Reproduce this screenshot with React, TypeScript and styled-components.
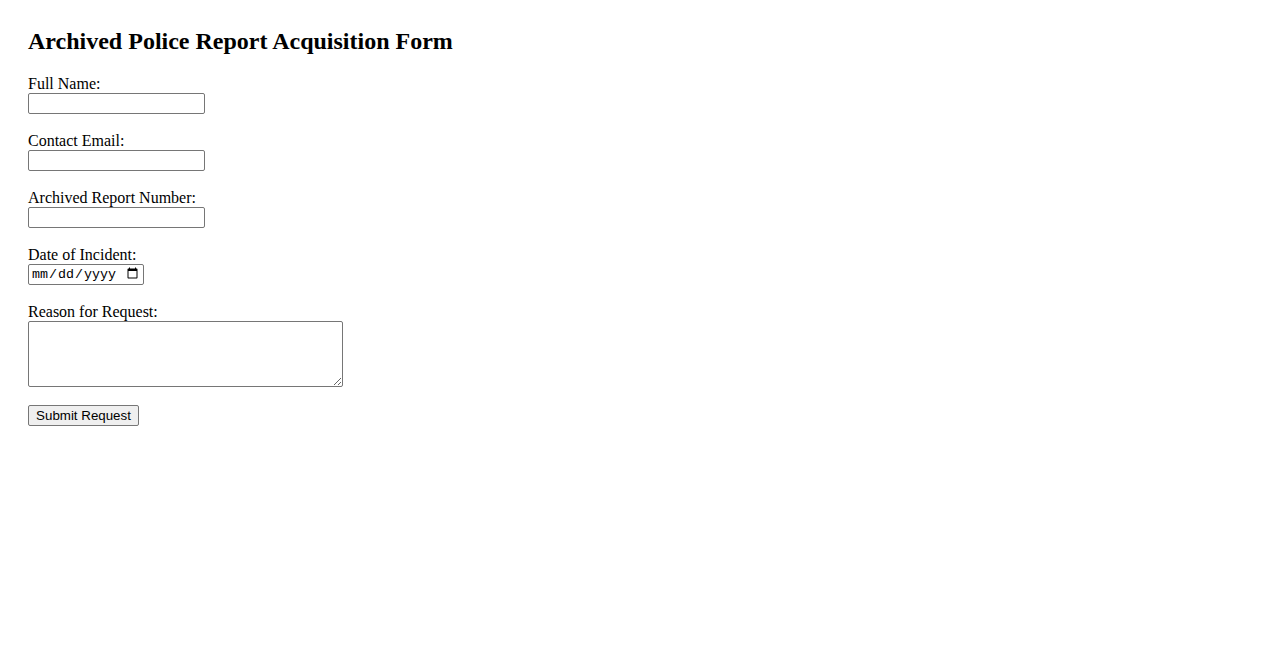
import styled, { createGlobalStyle } from "styled-components";

const GlobalStyle = createGlobalStyle`
    html, body {
        margin: 0;
        padding: 0;
        background: #ffffff;
    }
    body {
        font-family: "Liberation Serif", "Times New Roman", serif;
        font-size: 16px;
        color: #000000;
    }
`

const Page = styled.main`
    padding: 28px;
`

const Heading = styled.h2`
    margin: 0 0 19px;
    font-size: 24px;
    font-weight: 700;
    line-height: 27.5px;
`

const Form = styled.form`
    display: flex;
    flex-direction: column;
    align-items: flex-start;
`

const Field = styled.div`
    display: flex;
    flex-direction: column;
    align-items: flex-start;
    margin-bottom: 18px;
`

const Label = styled.label`
    display: block;
    height: 18px;
    line-height: 18px;
`

const TextInput = styled.input<{ $width?: number }>`
    box-sizing: border-box;
    width: ${p => p.$width ?? 177}px;
    height: 21px;
    margin: 0;
    padding: 1px 2px;
    border: 1px solid #767676;
    border-radius: 2px;
    background: #ffffff;
    font-family: "Liberation Sans", Arial, sans-serif;
    font-size: 13.33px;
`

const DateInput = styled(TextInput)`
    font-family: "Liberation Mono", "Courier New", monospace;
    color: #000000;
`

const TextArea = styled.textarea`
    box-sizing: border-box;
    width: 315px;
    height: 66px;
    margin: 0;
    padding: 2px;
    border: 1px solid #767676;
    border-radius: 2px;
    font-family: "Liberation Mono", monospace;
    font-size: 13.33px;
`

const SubmitButton = styled.button`
    box-sizing: border-box;
    width: 111px;
    height: 21px;
    margin: 0;
    padding: 1px 6px;
    border: 1px solid #767676;
    border-radius: 2px;
    background: #efefef;
    color: #000000;
    font-family: "Liberation Sans", Arial, sans-serif;
    font-size: 13.33px;
    line-height: 17px;
`

export default function App() {
    return (
        <>
            <GlobalStyle/>
            <Page>
                <Heading>Archived Police Report Acquisition Form</Heading>
                <Form onSubmit={e => e.preventDefault()}>
                    <Field>
                        <Label htmlFor="name">Full Name:</Label>
                        <TextInput id="name" type="text"/>
                    </Field>
                    <Field>
                        <Label htmlFor="email">Contact Email:</Label>
                        <TextInput id="email" type="email"/>
                    </Field>
                    <Field>
                        <Label htmlFor="report">Archived Report Number:</Label>
                        <TextInput id="report" type="text"/>
                    </Field>
                    <Field>
                        <Label htmlFor="date">Date of Incident:</Label>
                        <DateInput id="date" type="date" $width={116}/>
                    </Field>
                    <Field>
                        <Label htmlFor="reason">Reason for Request:</Label>
                        <TextArea id="reason" rows={4}/>
                    </Field>
                    <SubmitButton type="submit">Submit Request</SubmitButton>
                </Form>
            </Page>
        </>
    );
}
